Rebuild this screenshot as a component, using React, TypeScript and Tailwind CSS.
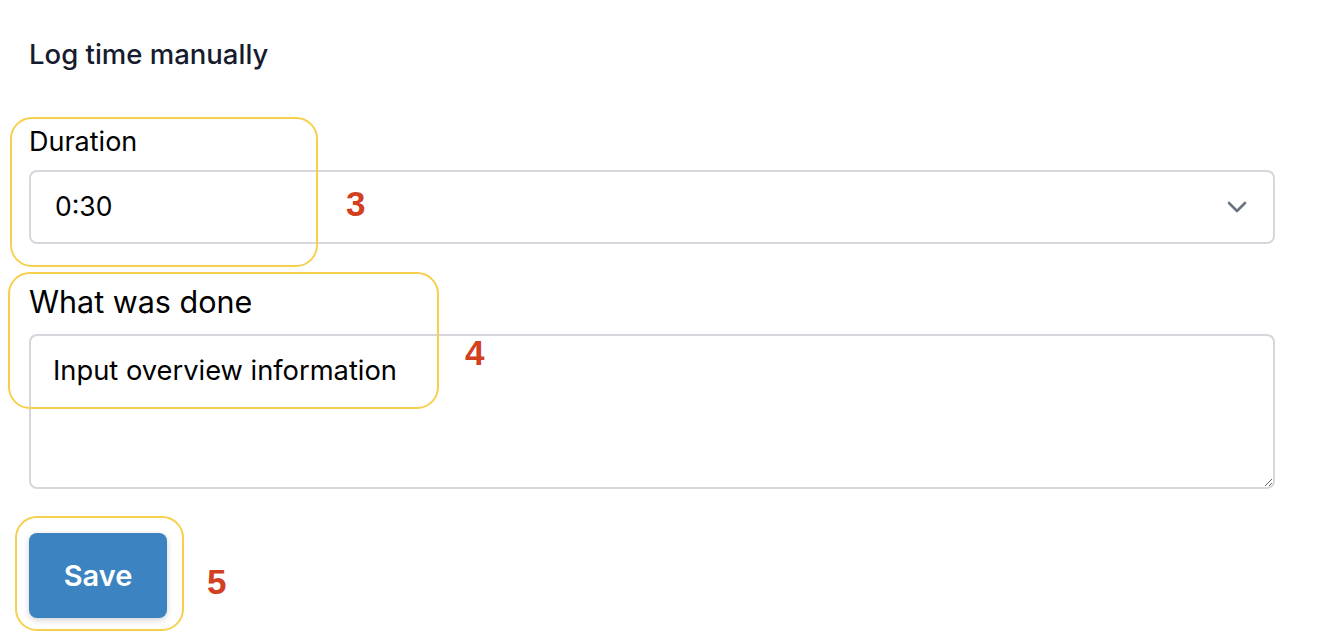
import React from 'react';

const font = { fontFamily: 'Inter, "Liberation Sans", sans-serif' };
const mark = { fontFamily: '"Liberation Sans", Arial, sans-serif' };

export default function App() {
  return (
    <div className="relative w-[1324px] h-[638px] overflow-hidden bg-white" style={font}>
      <div className="pl-[29px] pr-[49px] pt-[38px]">
        <h2 className="text-[27.5px] leading-[32px] font-medium text-[#161b2e]">Log time manually</h2>

        {/* Duration */}
        <label className="block mt-[56px] text-[27px] leading-[32px] text-black">Duration</label>
        <div className="mt-[12px] h-[74px] flex items-center justify-between border-2 border-[#d5d7dd] rounded-[8px] pl-[24px] pr-[26px]">
          <span className="text-[26.5px] text-black">0:30</span>
          <svg width="20" height="12" viewBox="0 0 20 12" fill="none">
            <path d="M2 2l8 8 8-8" stroke="#6b7280" strokeWidth="2.6" strokeLinecap="round" strokeLinejoin="round" />
          </svg>
        </div>

        {/* What was done */}
        <label className="block mt-[41px] text-[30.5px] leading-[34px] text-black">What was done</label>
        <textarea
          defaultValue="Input overview information"
          className="block mt-[15px] w-full h-[155px] border-2 border-[#d5d7dd] rounded-[8px] pl-[22px] pt-[18px] text-[27.3px] leading-[34px] text-black outline-none"
          style={font}
        />

        <button className="mt-[44px] w-[138px] h-[85px] rounded-[8px] bg-[#3c83c1] text-white text-[29px] font-semibold shadow-[0_2px_6px_rgba(0,0,0,0.18)]">
          Save
        </button>
      </div>

      {/* annotation overlays */}
      <div className="absolute left-[10px] top-[117px] w-[308px] h-[150px] border-[2.5px] border-[#f6d04d] rounded-[22px]" />
      <div className="absolute left-[8px] top-[272px] w-[431px] h-[137px] border-[2.5px] border-[#f6d04d] rounded-[22px]" />
      <div className="absolute left-[15px] top-[516px] w-[169px] h-[115px] border-[2.5px] border-[#f6d04d] rounded-[22px]" />
      <span className="absolute left-[346px] top-[184px] text-[35px] leading-[40px] font-bold text-[#d2401f]" style={mark}>3</span>
      <span className="absolute left-[465px] top-[333px] text-[35px] leading-[40px] font-bold text-[#d2401f]" style={mark}>4</span>
      <span className="absolute left-[207px] top-[562px] text-[35px] leading-[40px] font-bold text-[#d2401f]" style={mark}>5</span>
    </div>
  );
}
